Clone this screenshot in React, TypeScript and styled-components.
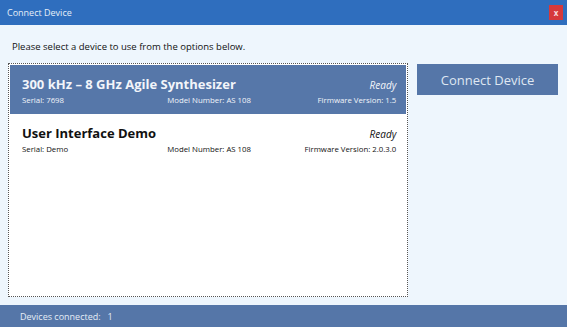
import React from 'react';
import styled, { createGlobalStyle } from "styled-components";

type DeviceType = {
    name: string;
    serial: string;
    model: string;
    firmware: string;
    status: string;
}

const devices: DeviceType[] = [
    { name: "300 kHz – 8 GHz Agile Synthesizer", serial: "7698", model: "AS 108", firmware: "1.5", status: "Ready" },
    { name: "User Interface Demo", serial: "Demo", model: "AS 108", firmware: "2.0.3.0", status: "Ready" },
];

const GlobalStyle = createGlobalStyle`
    html, body {
        margin: 0;
        padding: 0;
        background: #eef6fd;
    }
    body {
        font-family: "Open Sans", "Noto Sans", sans-serif;
    }
`

type DeviceItemPropsType = {
    device: DeviceType;
    selected: boolean;
}

const DeviceItem = (props: DeviceItemPropsType) => {
    const d = props.device;
    return (
        <Item selected={props.selected}>
            <ItemTop>
                <Name>{d.name}</Name>
                <Status>{d.status}</Status>
            </ItemTop>
            <ItemInfo>
                <span>Serial: {d.serial}</span>
                <Middle>Model Number: {d.model}</Middle>
                <Right>Firmware Version: {d.firmware}</Right>
            </ItemInfo>
        </Item>
    );
};

export default function App() {
    return (
        <Window>
            <GlobalStyle/>
            <TitleBar>
                <Title>Connect Device</Title>
                <CloseButton>x</CloseButton>
            </TitleBar>
            <Body>
                <Prompt>Please select a device to use from the options below.</Prompt>
                <Content>
                    <DeviceList>
                        {devices.map((d, i) => (
                            <DeviceItem key={d.name} device={d} selected={i === 0}/>
                        ))}
                    </DeviceList>
                    <ConnectButton>Connect Device</ConnectButton>
                </Content>
            </Body>
            <Footer>
                <span>Devices connected:</span>
                <span>1</span>
            </Footer>
        </Window>
    );
}

const Window = styled.div`
    width: 567px;
    height: 327px;
    display: flex;
    flex-direction: column;
    background: #eef6fd;
    overflow: hidden;
`

const TitleBar = styled.div`
    height: 25px;
    flex-shrink: 0;
    display: flex;
    align-items: center;
    justify-content: space-between;
    padding: 0 4px 0 7px;
    box-sizing: border-box;
    background: #2f6ebe;
`

const Title = styled.span`
    color: #e6eef8;
    font-size: 9px;
`

const CloseButton = styled.div`
    width: 14px;
    height: 15px;
    display: flex;
    align-items: center;
    justify-content: center;
    background: #d6393b;
    color: #f7dada;
    font-size: 8px;
    font-weight: bold;
    line-height: 1;
`

const Body = styled.div`
    flex: 1;
    display: flex;
    flex-direction: column;
    padding: 14px 9px 8px 8px;
    box-sizing: border-box;
`

const Prompt = styled.div`
    font-size: 9.5px;
    color: #111;
    padding-left: 4px;
    height: 15px;
    line-height: 15px;
    margin-bottom: 9px;
`

const Content = styled.div`
    flex: 1;
    display: flex;
    gap: 9px;
    align-items: flex-start;
`

const DeviceList = styled.div`
    width: 401px;
    height: 234px;
    box-sizing: border-box;
    border: 1px dotted #555;
    background: #fff;
    padding: 1px;
`

const Item = styled.div<{ selected: boolean }>`
    height: 49px;
    box-sizing: border-box;
    padding: 10px 10px 0 12px;
    background: ${p => p.selected ? "#5677a9" : "#fff"};
    color: ${p => p.selected ? "#f2f5fa" : "#111"};
`

const ItemTop = styled.div`
    display: flex;
    justify-content: space-between;
    align-items: baseline;
    height: 20px;
`

const Name = styled.span`
    font-size: 13px;
    font-weight: 700;
`

const Status = styled.span`
    font-size: 10px;
    font-style: italic;
`

const ItemInfo = styled.div`
    display: grid;
    grid-template-columns: 1fr auto 1fr;
    font-size: 7.8px;
`

const Middle = styled.span`
    text-align: center;
`

const Right = styled.span`
    text-align: right;
`

const ConnectButton = styled.button`
    width: 141px;
    height: 31px;
    border: none;
    background: #5576a8;
    color: #dfe7f2;
    font-family: "Open Sans", sans-serif;
    font-size: 13px;
    padding: 0;
    margin-top: 1px;
`

const Footer = styled.div`
    height: 22px;
    flex-shrink: 0;
    display: flex;
    align-items: center;
    gap: 7px;
    padding-left: 20px;
    background: #5576a8;
    color: #e6edf6;
    font-size: 9px;
`
